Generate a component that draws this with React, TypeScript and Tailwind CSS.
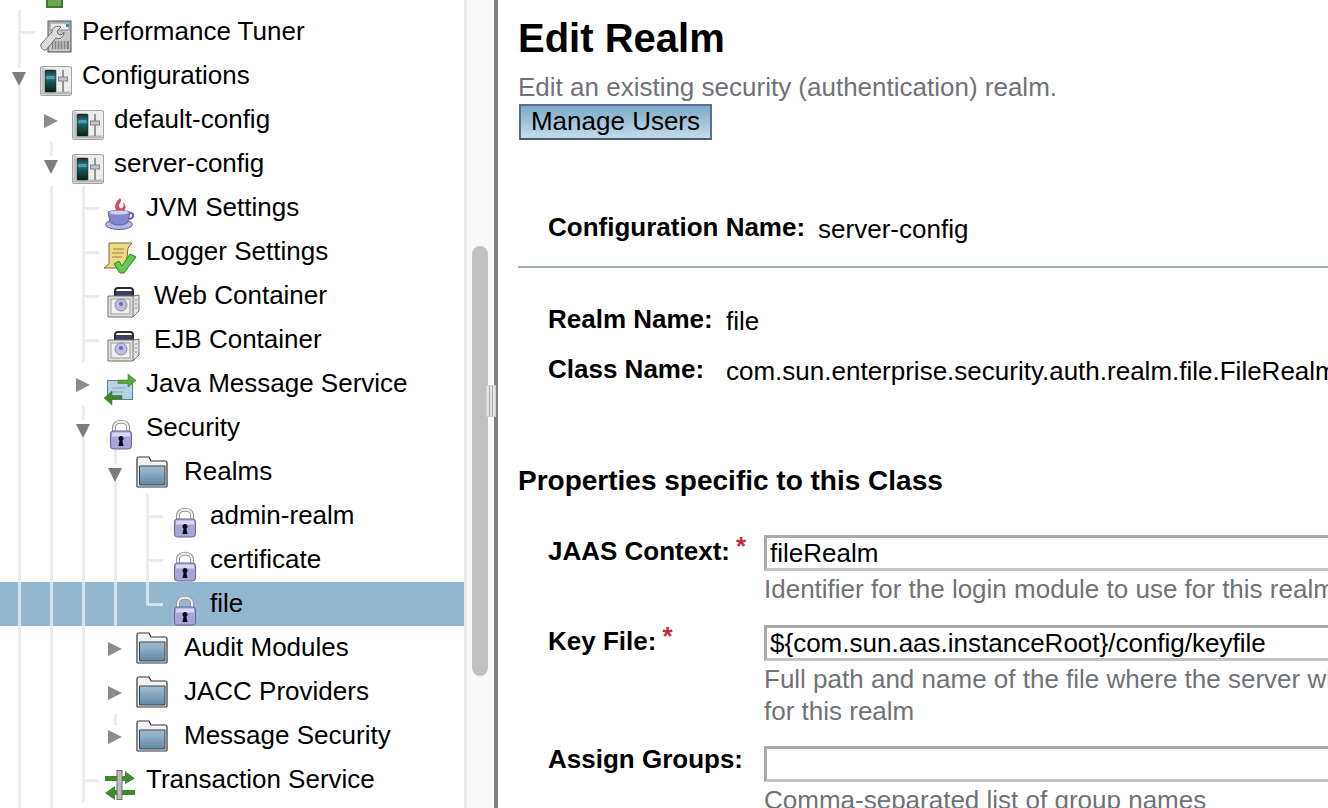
import type { ReactNode } from "react";

type Cell = "" | "v" | "tee" | "elbow" | "closed" | "closedTop" | "openTop" | "openFull";

function Line({ className }: { className: string }) {
  return <div className={`w-[3px] shrink-0 ${className}`} />;
}

function TreeCell({ kind, selected }: { kind: Cell; selected?: boolean }) {
  const fill = selected ? "bg-[#d6e2ea]" : "bg-[#ebebeb]";
  const edge = selected ? "border-[#d6e2ea]" : "border-[#ebebeb]";
  if (kind === "v") {
    return (
      <div className="w-8 h-11 shrink-0 flex justify-center">
        <Line className={`h-11 ${fill}`} />
      </div>
    );
  }
  if (kind === "tee" || kind === "elbow") {
    return (
      <div className="w-8 h-11 shrink-0 pl-[15px]">
        <div className={`w-[17px] border-l-[3px] ${edge} ${kind === "tee" ? "h-11" : "h-[24px]"}`}>
          <div className={`h-[24px] border-b-[3px] ${edge}`} />
        </div>
      </div>
    );
  }
  if (kind === "") return <div className="w-8 h-11 shrink-0" />;
  if (kind === "closed" || kind === "closedTop") {
    return (
      <div className="w-8 h-11 shrink-0 flex flex-col items-center">
        <Line className={`h-[11px] ${fill} ${kind === "closedTop" ? "" : "invisible"}`} />
        <svg width="14" height="14" viewBox="0 0 14 14" className="mt-[5px] shrink-0">
          <path d="M0 0L14 7L0 14Z" fill="#8b8b8b" />
        </svg>
      </div>
    );
  }
  return (
    <div className="w-8 h-11 shrink-0 flex flex-col items-center">
      <Line className={`h-[14px] ${fill}`} />
      <svg width="14" height="14" viewBox="0 0 14 14" className="mt-1 shrink-0">
        <path d="M0 0H14L7 14Z" fill="#7b7b7b" />
      </svg>
      {kind === "openFull" && <Line className={`h-3 ${fill}`} />}
    </div>
  );
}

function ServerPanelIcon() {
  return (
    <svg width="32" height="30" viewBox="0 0 32 30">
      <defs>
        <linearGradient id="srv" x1="0" y1="0" x2="0" y2="1">
          <stop offset="0" stopColor="#1c2a2a" />
          <stop offset="0.35" stopColor="#2d8286" />
          <stop offset="0.55" stopColor="#185450" />
          <stop offset="1" stopColor="#06231f" />
        </linearGradient>
      </defs>
      <rect x="0.5" y="0.5" width="31" height="29" rx="1.500" fill="#ededed" stroke="#a3a3a3" />
      <rect x="1.500" y="25.500" width="29" height="3" fill="#b9b9b9" />
      <rect x="1.500" y="1.500" width="3" height="25" fill="#c4c4c4" />
      <rect x="5" y="4" width="11" height="22" rx="1" fill="url(#srv)" stroke="#1b1b1b" strokeWidth="0.500" />
      <rect x="6.500" y="10" width="8" height="3" fill="#43a3a6" />
      <rect x="22" y="4" width="2" height="22" fill="#8f9698" />
      <rect x="18.500" y="11" width="9" height="4" fill="#c3c6c7" stroke="#7c8488" />
    </svg>
  );
}

function TunerIcon() {
  return (
    <svg width="32" height="33" viewBox="0 0 32 33">
      <rect x="8" y="1" width="23" height="31" fill="#c6c6c6" stroke="#4e4e4e" />
      <rect x="10" y="3" width="19" height="7" fill="#ececec" stroke="#8a8a8a" />
      <rect x="26" y="4" width="3" height="3" fill="#3b82d0" />
      <rect x="12" y="21" width="17" height="8" fill="#838383" />
      <path d="M14 21v8M17 21v8M20 21v8M23 21v8M26 21v8" stroke="#dedede" />
      <path d="M1 24L12 12C12 7 17 5 21 7L17 11L18 14L21 15L24 12C24 17 20 20 16 18L6 30C3 31 0 27 1 24Z" fill="#dcdcdc" stroke="#6a6a6a" />
    </svg>
  );
}

function CupIcon() {
  return (
    <svg width="30" height="32" viewBox="0 0 30 32">
      <path d="M15 0C19 4 11 6 15 10C17 11 20 9 18 4C23 9 20 14 15 14C8 13 9 5 15 0Z" fill="#dc4a55" />
      <ellipse cx="14" cy="26.500" rx="13.500" ry="5" fill="#b6b6e4" stroke="#6262a2" />
      <path d="M3 14C7 12 21 12 25 14L23 24C20 28 8 28 5 24Z" fill="#8585cc" stroke="#6262a2" />
      <ellipse cx="14" cy="14.500" rx="10" ry="2" fill="#cfcfee" />
      <path d="M25 15C30 15 29 21 23 21" fill="none" stroke="#6262a2" strokeWidth="2" />
    </svg>
  );
}

function LoggerIcon() {
  return (
    <svg width="32" height="32" viewBox="0 0 32 32">
      <path d="M5 1H28L24 6L22 26H0L5 22Z" fill="#ecd98a" stroke="#80692a" />
      <path d="M9 7H20M8 11H20M8 15H18" stroke="#b9a050" strokeWidth="1.500" />
      <path d="M10 22L15 19L18 24L26 12L32 15L20 31H16Z" fill="#66c84c" stroke="#2e7f24" />
    </svg>
  );
}

function ContainerIcon() {
  return (
    <svg width="33" height="31" viewBox="0 0 33 31">
      <path d="M8 9V4C8 2 9 1 11 1H23C25 1 26 2 26 4V9" fill="none" stroke="#2c2c2c" strokeWidth="2" />
      <rect x="9" y="4" width="16" height="5" fill="#3f3f66" />
      <path d="M1 9H26L32 8V24L26 30H1Z" fill="#e2e2e2" stroke="#707070" />
      <path d="M26 9V30" stroke="#707070" />
      <path d="M29 12V24" stroke="#8a8a8a" strokeDasharray="2 2" />
      <rect x="4" y="12" width="19" height="15" fill="#f0f0f0" stroke="#999" />
      <circle cx="14" cy="18" r="6" fill="#bcbedd" stroke="#8c8c9c" />
      <circle cx="14" cy="17" r="2" fill="#6b6bb0" />
    </svg>
  );
}

function MessageIcon() {
  return (
    <svg width="32" height="32" viewBox="0 0 32 32">
      <rect x="3.500" y="7.500" width="25" height="19" fill="#b4d3e7" stroke="#5d7f99" />
      <path d="M8 15H22M8 19H20" stroke="#84a7c0" />
      <path d="M14 7H24V1L32 7.500L24 14V10.500H14Z" fill="#58a83a" stroke="#2f6f20" strokeWidth="0.500" />
      <path d="M18 26H8V32L0 25L8 18V22.500H18Z" fill="#3e8a2b" stroke="#2f6f20" strokeWidth="0.500" />
    </svg>
  );
}

function LockIcon() {
  return (
    <svg width="24" height="32" viewBox="0 0 24 32">
      <path d="M5 15V9C5 2 19 2 19 9V15" fill="none" stroke="#9a9a9a" strokeWidth="4" />
      <path d="M5 15V9C5 2 19 2 19 9V15" fill="none" stroke="#f0f0f0" strokeWidth="2" />
      <rect x="1.500" y="13" width="21" height="18" rx="3" fill="#a6a5dc" stroke="#67678f" />
      <rect x="3" y="14.500" width="18" height="4" fill="#d7d7f2" />
      <circle cx="12" cy="20.500" r="2.500" fill="#0c0c14" />
      <path d="M11 21H13L14.500 28H9.500Z" fill="#0c0c14" />
    </svg>
  );
}

function FolderIcon() {
  return (
    <svg width="32" height="32" viewBox="0 0 32 32">
      <defs>
        <linearGradient id="fld" x1="0" y1="0" x2="0" y2="1">
          <stop offset="0" stopColor="#a5bfd4" />
          <stop offset="1" stopColor="#5f88a9" />
        </linearGradient>
      </defs>
      <path d="M1 30V3C1 2 2 1 3 1H13L15 5H29C30 5 31 6 31 7V30C31 31 30 31 29 31H2C1 31 1 31 1 30Z" fill="#f1f3f5" stroke="#30353b" strokeWidth="1.200" />
      <path d="M3.500 10H29V29H3.500Z" fill="url(#fld)" stroke="#3a4047" />
    </svg>
  );
}

function TransactionIcon() {
  return (
    <svg width="32" height="31" viewBox="0 0 32 31">
      <path d="M1 6H21V1L31 8.500L21 14V11H1Z" fill="#3f8a2c" />
      <path d="M31 20H11V16L1 23L11 30V25H31Z" fill="#3f8a2c" />
      <rect x="13" y="0.500" width="5" height="29" fill="#bdbdbd" stroke="#6e6e6e" />
    </svg>
  );
}

type Row = { cells: Cell[]; icon: ReactNode; label: string; selected?: boolean; iconClass: string; labelClass: string };

const std = "ml-[5px] mt-3 w-8";
const wide = "ml-2 mt-[13px] w-[33px]";
const folder = "ml-[5px] mt-[6px] w-8";
const lock = "ml-[10px] mt-3 w-6";

const rows: Row[] = [
  { cells: ["tee"], icon: <TunerIcon />, label: "Performance Tuner", iconClass: "ml-[5px] mt-[10px] w-8", labelClass: "ml-[10px]" },
  { cells: ["openFull"], icon: <ServerPanelIcon />, label: "Configurations", iconClass: std, labelClass: "ml-[10px]" },
  { cells: ["v", "closed"], icon: <ServerPanelIcon />, label: "default-config", iconClass: std, labelClass: "ml-[10px]" },
  { cells: ["v", "openTop"], icon: <ServerPanelIcon />, label: "server-config", iconClass: std, labelClass: "ml-[10px]" },
  { cells: ["v", "v", "tee"], icon: <CupIcon />, label: "JVM Settings", iconClass: "ml-[6px] mt-3 w-[30px]", labelClass: "ml-[11px]" },
  { cells: ["v", "v", "tee"], icon: <LoggerIcon />, label: "Logger Settings", iconClass: std, labelClass: "ml-[10px]" },
  { cells: ["v", "v", "tee"], icon: <ContainerIcon />, label: "Web Container", iconClass: wide, labelClass: "ml-[14px]" },
  { cells: ["v", "v", "tee"], icon: <ContainerIcon />, label: "EJB Container", iconClass: wide, labelClass: "ml-[14px]" },
  { cells: ["v", "v", "closed"], icon: <MessageIcon />, label: "Java Message Service", iconClass: "ml-[5px] mt-[11px] w-8", labelClass: "ml-[10px]" },
  { cells: ["v", "v", "openFull"], icon: <LockIcon />, label: "Security", iconClass: "ml-[10px] mt-3 w-6", labelClass: "ml-[13px]" },
  { cells: ["v", "v", "v", "openFull"], icon: <FolderIcon />, label: "Realms", iconClass: folder, labelClass: "ml-4" },
  { cells: ["v", "v", "v", "v", "tee"], icon: <LockIcon />, label: "admin-realm", iconClass: lock, labelClass: "ml-[13px]" },
  { cells: ["v", "v", "v", "v", "tee"], icon: <LockIcon />, label: "certificate", iconClass: lock, labelClass: "ml-[13px]" },
  { cells: ["v", "v", "v", "v", "elbow"], icon: <LockIcon />, label: "file", iconClass: lock, labelClass: "ml-[13px]", selected: true },
  { cells: ["v", "v", "v", "closed"], icon: <FolderIcon />, label: "Audit Modules", iconClass: folder, labelClass: "ml-4" },
  { cells: ["v", "v", "v", "closed"], icon: <FolderIcon />, label: "JACC Providers", iconClass: folder, labelClass: "ml-4" },
  { cells: ["v", "v", "v", "closedTop"], icon: <FolderIcon />, label: "Message Security", iconClass: folder, labelClass: "ml-4" },
  { cells: ["v", "v", "tee"], icon: <TransactionIcon />, label: "Transaction Service", iconClass: std, labelClass: "ml-[10px]" },
];

function TreeRow({ row }: { row: Row }) {
  return (
    <div className={`h-11 pl-[3px] flex items-start overflow-hidden ${row.selected ? "bg-[#93b7cf]" : ""}`}>
      {row.cells.map((c, i) => (
        <TreeCell key={i} kind={c} selected={row.selected} />
      ))}
      <div className={`shrink-0 ${row.iconClass}`}>{row.icon}</div>
      <div className={`leading-[42px] whitespace-nowrap ${row.labelClass}`}>{row.label}</div>
    </div>
  );
}

function Field({
  label,
  value,
  help,
  star,
  labelClass,
  className,
}: {
  label: string;
  value?: string;
  help: string[];
  star?: boolean;
  labelClass?: string;
  className?: string;
}) {
  return (
    <div className={`flex ${className ?? ""}`}>
      <div className={`w-[216px] shrink-0 flex whitespace-nowrap ${labelClass ?? ""}`}>
        <span className="leading-[32px] font-bold">{label}</span>
        {star && <span className="text-[#c8283c] font-bold leading-[22px] ml-[6px]">*</span>}
      </div>
      <div className="flex-1 min-w-0">
        <div className="h-[36px] w-[700px] border-[3px] border-[#a9a9a9] border-b-[#c4c4c4] pl-[3px] leading-[30px] whitespace-nowrap bg-white">
          {value}
        </div>
        <div className="mt-[2px]">
          {help.map((h) => (
            <div key={h} className="text-[#6f7277] leading-[32px] whitespace-nowrap">
              {h}
            </div>
          ))}
        </div>
      </div>
    </div>
  );
}

export default function App() {
  return (
    <div className="w-[1328px] h-[808px] overflow-hidden flex bg-white text-black text-[26px] font-['Liberation_Sans',Arial,sans-serif]">
      <div className="w-[464px] shrink-0">
        <div className="h-[10px] pl-[46px]">
          <div className="w-[17px] h-[8px] bg-[#6aa84f] border-b-2 border-x-2 border-[#3f7a2c]" />
        </div>
        {rows.map((r) => (
          <TreeRow key={r.label} row={r} />
        ))}
        <div className="pl-[3px] flex">
          <TreeCell kind="v" />
          <TreeCell kind="v" />
        </div>
      </div>

      <div className="relative w-[34px] shrink-0 flex">
        <div className="w-[30px] bg-[#f9f9f9] border-l-[3px] border-[#ececec] pl-[5px] pt-[246px]">
          <div className="w-4 h-[430px] rounded-full bg-[#c1c1c1]" />
        </div>
        <div className="w-1 bg-[#808080]" />
        <div className="absolute left-[22px] top-[385px] w-[10px] h-[32px] bg-[#e6e6e6] border border-[#cfcfcf] flex justify-evenly">
          <div className="w-px bg-[#a9a9a9]" />
          <div className="w-px bg-[#a9a9a9]" />
        </div>
      </div>

      <div className="flex-1 min-w-0 pl-5 whitespace-nowrap">
        <h1 className="mt-[16px] text-[40px] leading-[44px] font-bold">Edit Realm</h1>
        <div className="mt-[11px] text-[#6f7277] leading-[32px]">Edit an existing security (authentication) realm.</div>
        <div className="ml-px mt-[1px] w-[193px] h-[36px] border-2 border-[#5a7088] border-b-[#465d75] bg-gradient-to-b from-[#7ea9c6] to-[#c3dceb] text-center leading-[30px]">
          Manage Users
        </div>

        <div className="mt-[65px] ml-[30px] flex h-[44px] leading-[44px]">
          <span className="font-bold">Configuration Name:</span>
          <span className="ml-[13px] mt-[2px]">server-config</span>
        </div>
        <div className="h-[2px] mt-[17px] bg-[#9fadb6]" />

        <div className="mt-[29px] ml-[30px] flex leading-[44px] h-[44px]">
          <span className="font-bold w-[178px] shrink-0">Realm Name:</span>
          <span className="mt-[2px]">file</span>
        </div>
        <div className="mt-[6px] ml-[30px] flex leading-[44px] h-[44px]">
          <span className="font-bold w-[178px] shrink-0">Class Name:</span>
          <span className="mt-[2px]">com.sun.enterprise.security.auth.realm.file.FileRealm</span>
        </div>

        <h2 className="mt-[68px] font-bold text-[28px] leading-[44px]">Properties specific to this Class</h2>

        <div className="ml-[30px] mt-[32px]">
          <Field label="JAAS Context:" value="fileRealm" help={["Identifier for the login module to use for this realm"]} star />
          <Field
            label="Key File:"
            value="${com.sun.aas.instanceRoot}/config/keyfile"
            help={["Full path and name of the file where the server will store all user", "for this realm"]}
            star
            className="mt-5"
          />
          <Field label="Assign Groups:" help={["Comma-separated list of group names"]} labelClass="-mt-[3px]" className="mt-[19px]" />
        </div>
      </div>
    </div>
  );
}
